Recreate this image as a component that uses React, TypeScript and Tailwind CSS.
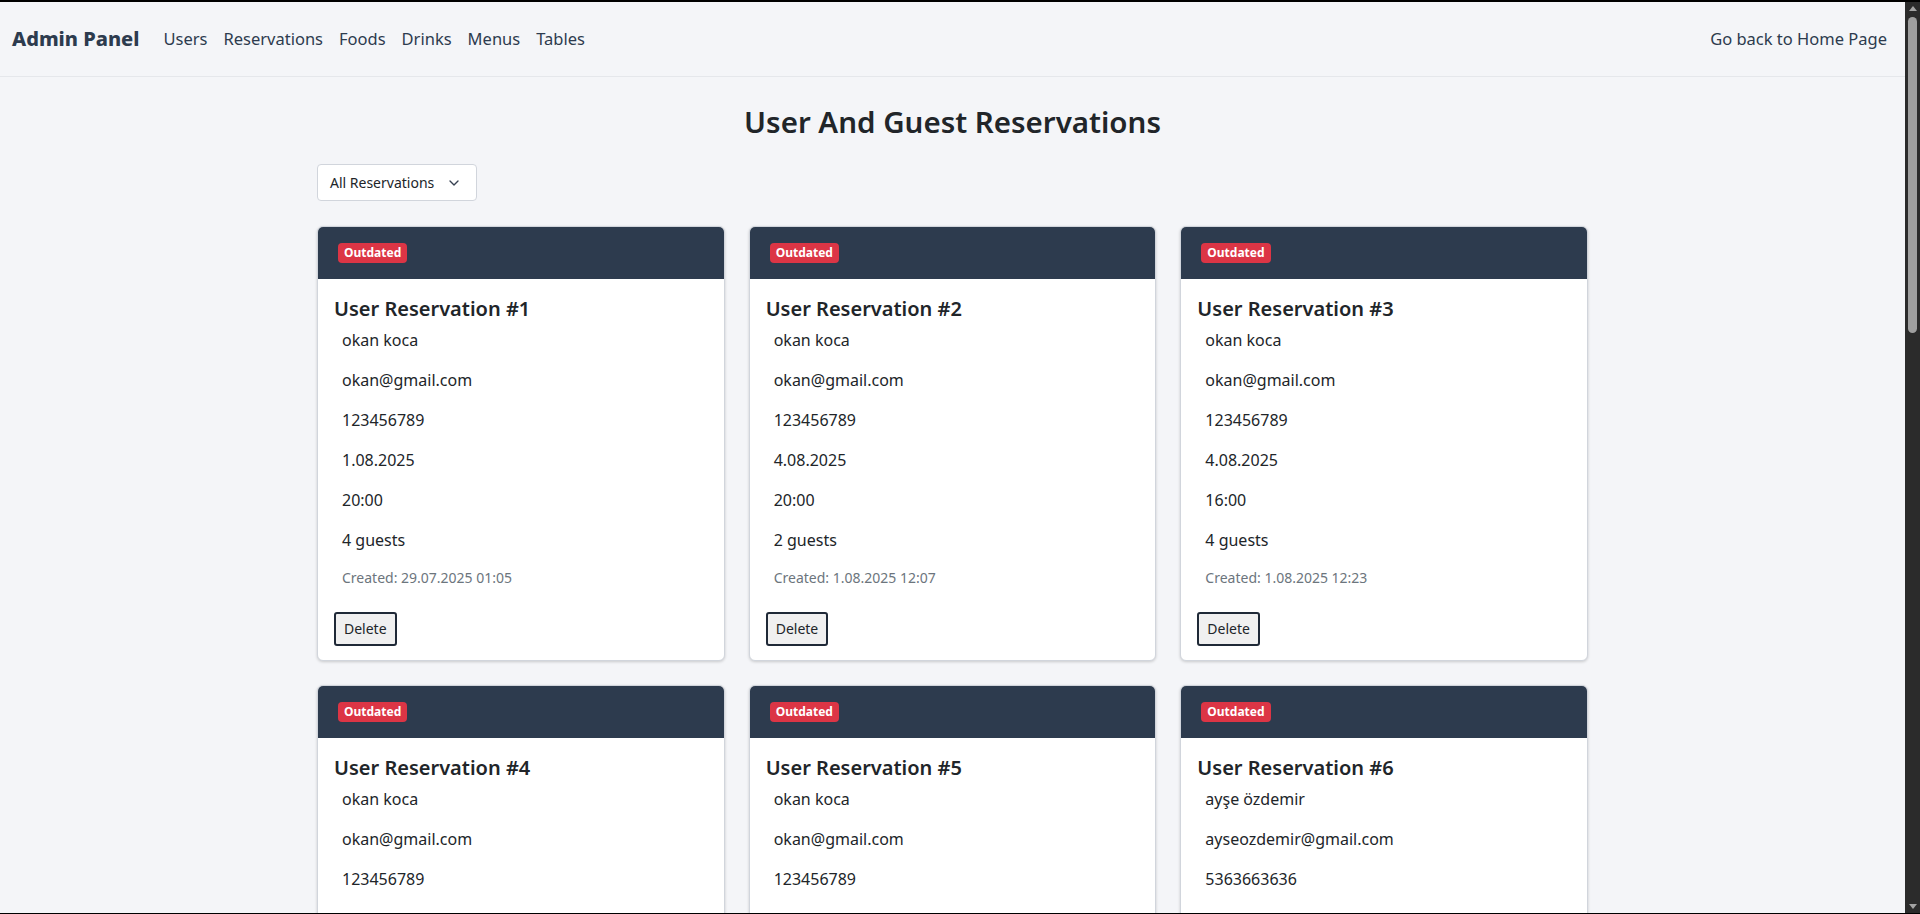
import { ChevronDown } from "lucide-react";

type Reservation = {
  id: number;
  name: string;
  email: string;
  phone: string;
  date: string;
  time: string;
  guests: number;
  created: string;
};

const reservations: Reservation[] = [
  { id: 1, name: "okan koca", email: "okan@gmail.com", phone: "123456789", date: "1.08.2025", time: "20:00", guests: 4, created: "29.07.2025 01:05" },
  { id: 2, name: "okan koca", email: "okan@gmail.com", phone: "123456789", date: "4.08.2025", time: "20:00", guests: 2, created: "1.08.2025 12:07" },
  { id: 3, name: "okan koca", email: "okan@gmail.com", phone: "123456789", date: "4.08.2025", time: "16:00", guests: 4, created: "1.08.2025 12:23" },
  { id: 4, name: "okan koca", email: "okan@gmail.com", phone: "123456789", date: "5.08.2025", time: "19:00", guests: 3, created: "1.08.2025 14:10" },
  { id: 5, name: "okan koca", email: "okan@gmail.com", phone: "123456789", date: "6.08.2025", time: "21:00", guests: 2, created: "2.08.2025 09:41" },
  { id: 6, name: "ayşe özdemir", email: "ayseozdemir@gmail.com", phone: "5363663636", date: "7.08.2025", time: "18:00", guests: 5, created: "2.08.2025 16:32" },
];

const navLinks = ["Users", "Reservations", "Foods", "Drinks", "Menus", "Tables"];

function ReservationCard({ r }: { r: Reservation }) {
  const rows = [r.name, r.email, r.phone, r.date, r.time, `${r.guests} guests`];
  return (
    <div className="bg-white border border-gray-300 rounded-md shadow-[0_1px_3px_rgba(0,0,0,0.18)] overflow-hidden">
      <div className="bg-[#2d3b4e] px-5 py-4 flex">
        <span className="bg-[#dc3545] text-white text-[12px] leading-[20px] font-bold px-[6px] rounded-[4px]">
          Outdated
        </span>
      </div>
      <div className="p-4 pb-[14px] text-[#212529]">
        <h3 className="text-[20px] leading-[28px] font-semibold mb-[5px]">User Reservation #{r.id}</h3>
        {rows.map((row, i) => (
          <p key={i} className="px-2 text-[16px] leading-6 mb-4">
            {row}
          </p>
        ))}
        <p className="px-2 text-[14px] leading-5 text-[#6c757d]">Created: {r.created}</p>
        <button className="mt-6 px-2 py-[5px] text-[14px] leading-5 text-[#212529] bg-[#f0f0f0] border-2 border-[#1f2937] rounded-[3px]">
          Delete
        </button>
      </div>
    </div>
  );
}

function Scrollbar() {
  return (
    <div className="w-[15px] bg-[#2b2b2b] flex flex-col items-center">
      <div className="mt-[4px] w-0 h-0 border-x-[4px] border-x-transparent border-b-[5px] border-b-[#a3a3a3]" />
      <div className="mt-[6px] w-[9px] h-[316px] rounded-full bg-[#9f9f9f]" />
      <div className="flex-1" />
      <div className="mb-[4px] w-0 h-0 border-x-[4px] border-x-transparent border-t-[5px] border-t-[#a3a3a3]" />
    </div>
  );
}

export default function App() {
  return (
    <div className="h-screen flex flex-col border-t-2 border-b border-black bg-[#f4f5f8] font-['Noto_Sans',sans-serif]">
      <div className="flex-1 flex min-h-0">
        <div className="flex-1 overflow-hidden">
          <nav className="h-[75px] flex items-center justify-between px-3 border-b border-gray-200 bg-[#f4f5f8]">
            <div className="flex items-center">
              <span className="text-[20px] font-extrabold text-[#2d3b4e] mr-6">Admin Panel</span>
              <div className="flex items-center gap-4">
                {navLinks.map((l) => (
                  <a key={l} className="text-[16.5px] text-[#2d3b4e] cursor-pointer">
                    {l}
                  </a>
                ))}
              </div>
            </div>
            <a className="text-[16.5px] text-[#2d3b4e] mr-[6px]">Go back to Home Page</a>
          </nav>

          <main className="max-w-[1271px] mx-auto pt-[27px] pb-10">
            <h1 className="text-center text-[29.5px] leading-9 font-semibold text-[#212529]">
              User And Guest Reservations
            </h1>
            <div className="mt-6 mb-[25px]">
              <button className="h-[37px] w-[160px] flex items-center justify-between pl-3 pr-[14px] bg-white border border-gray-300 rounded-[4px] text-[14px] text-[#212529]">
                All Reservations
                <ChevronDown className="w-4 h-4 text-[#374151]" strokeWidth={2} />
              </button>
            </div>
            <div className="grid grid-cols-3 gap-6">
              {reservations.map((r) => (
                <ReservationCard key={r.id} r={r} />
              ))}
            </div>
          </main>
        </div>
        <Scrollbar />
      </div>
    </div>
  );
}
